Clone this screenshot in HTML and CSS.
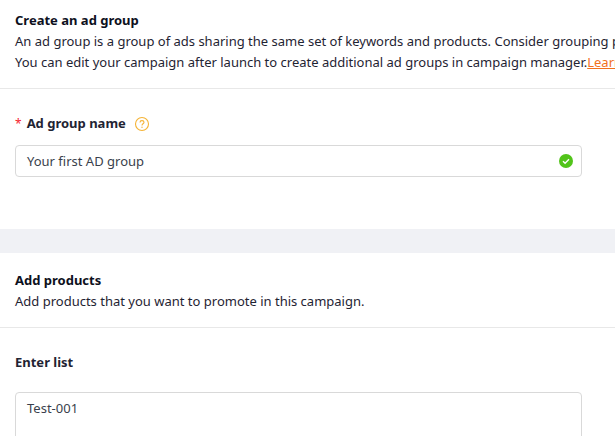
FILE: index.html
```html
<!DOCTYPE html>
<html lang="en">
<head>
<meta charset="utf-8">
<title>Create an ad group</title>
<link rel="stylesheet" href="styles.css">
</head>
<body>
<main class="page">
  <section class="card card-first">
    <header class="card-head">
      <h2 class="card-title">Create an ad group</h2>
      <p class="card-desc">An ad group is a group of ads sharing the same set of keywords and products. Consider grouping products</p>
      <p class="card-desc">You can edit your campaign after launch to create additional ad groups in campaign manager.<a class="link" href="#">Learn more</a></p>
    </header>
    <div class="card-body">
      <div class="label-row">
        <span class="req">*</span>
        <label class="label">Ad group name</label>
        <svg class="help" width="16" height="16" viewBox="0 0 16 16" aria-hidden="true">
          <circle cx="8" cy="8" r="6.5" fill="none" stroke="#f5b335" stroke-width="1.1"/>
          <path d="M6 6.4C6 5.2 6.9 4.6 8 4.6s2 .7 2 1.7c0 1.5-2 1.5-2 3.1" fill="none" stroke="#f5b335" stroke-width="1.1"/>
          <circle cx="8" cy="11.3" r=".7" fill="#f5b335"/>
        </svg>
      </div>
      <div class="field">
        <span class="field-text">Your first AD group</span>
        <svg class="ok" width="14" height="14" viewBox="0 0 14 14" aria-hidden="true">
          <circle cx="7" cy="7" r="7" fill="#52c41a"/>
          <path d="M4 7.2l2.1 2.1L10 5.2" fill="none" stroke="#fff" stroke-width="1.4"/>
        </svg>
      </div>
    </div>
  </section>
  <section class="card">
    <header class="card-head card-head-second">
      <h2 class="card-title">Add products</h2>
      <p class="card-desc">Add products that you want to promote in this campaign.</p>
    </header>
    <div class="card-body card-body-second">
      <div class="label-row label-row-second">
        <label class="label">Enter list</label>
      </div>
      <div class="area">Test-001</div>
    </div>
  </section>
</main>
</body>
</html>
```
FILE: styles.css
```css
* { box-sizing: border-box; }
html, body { margin: 0; padding: 0; height: 100%; overflow: hidden; background: #fff; }
body { font-family: "Noto Sans", "Open Sans", sans-serif; font-size: 13px; line-height: 21px; color: #1f2433; }
.page { width: 615px; height: 436px; overflow: hidden; background: #f0f1f5; }
.card { background: #fff; }
.card-first { height: 229px; margin-bottom: 24px; }
.card-head { height: 89px; padding: 10px 0 0 15px; border-bottom: 1px solid #e8e8e8; white-space: nowrap; overflow: hidden; }
.card-head-second { height: 75px; padding-top: 17px; }
.card-title { margin: 0; font-size: 13px; font-weight: 700; line-height: 21px; color: #0d1020; }
.card-desc { margin: 0; line-height: 21px; }
.link { color: #f2711c; text-decoration: underline; }
.card-body { padding: 24px 33px 0 15px; }
.card-body-second { padding-top: 24px; background: #fff; height: 200px; }
.label-row { display: flex; align-items: center; height: 21px; margin-bottom: 11px; }
.label-row-second { margin-bottom: 19px; }
.req { color: #f5222d; margin-right: 5px; font-size: 12px; }
.label { font-weight: 700; color: #1f2433; }
.help { margin-left: 8px; }
.field { display: flex; align-items: center; justify-content: space-between; width: 567px; height: 32px; padding: 0 8px 0 11px; border: 1px solid #d9d9d9; border-radius: 4px; color: #3a3f4c; }
.area { width: 567px; height: 80px; padding: 5px 11px; border: 1px solid #d9d9d9; border-radius: 4px; color: #3a3f4c; }
```
